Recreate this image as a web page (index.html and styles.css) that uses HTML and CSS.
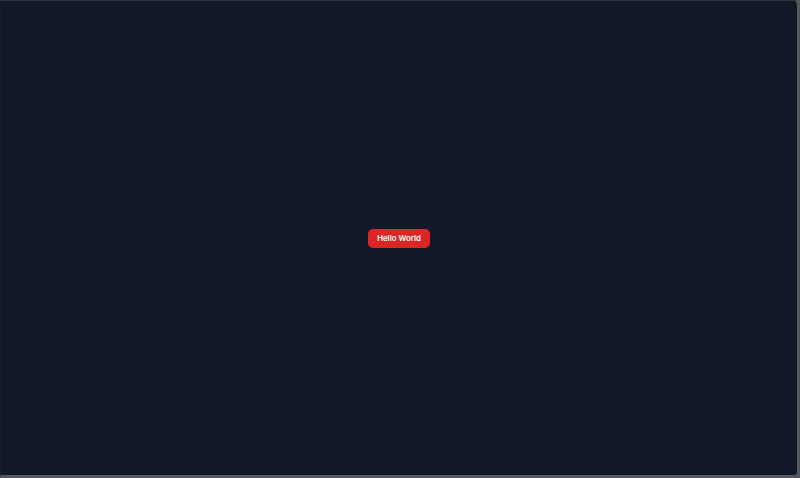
FILE: index.html
```html
<!DOCTYPE html>
<html lang="en">
<head>
<meta charset="utf-8">
<title>Hello World</title>
<link rel="stylesheet" href="styles.css">
</head>
<body>
<div class="frame">
  <main class="stage">
    <button class="btn" type="button">Hello World</button>
  </main>
</div>
</body>
</html>
```
FILE: styles.css
```css
html, body {
  margin: 0;
  padding: 0;
  width: 100%;
  height: 100%;
  background: #5a5b5e;
}
.frame {
  box-sizing: border-box;
  width: 800px;
  height: 478px;
  background: #111827;
  border-top: 1px solid #2c313b;
  border-left: 1px solid #161c2a;
  border-right: 3px solid #55575b;
  border-bottom: 3px solid #55575b;
  border-radius: 0 6px 6px 4px;
  overflow: hidden;
}
.stage {
  width: 100%;
  height: 100%;
  display: flex;
  align-items: center;
  justify-content: center;
}
.btn {
  font-family: Inter, Roboto, "Liberation Sans", Arial, sans-serif;
  font-weight: 600;
  font-size: 7.8px;
  line-height: 11px;
  color: #ffffff;
  background: #dc2626;
  border: none;
  border-radius: 5px;
  padding: 4px 9px 4px;
  cursor: pointer;
}
```
